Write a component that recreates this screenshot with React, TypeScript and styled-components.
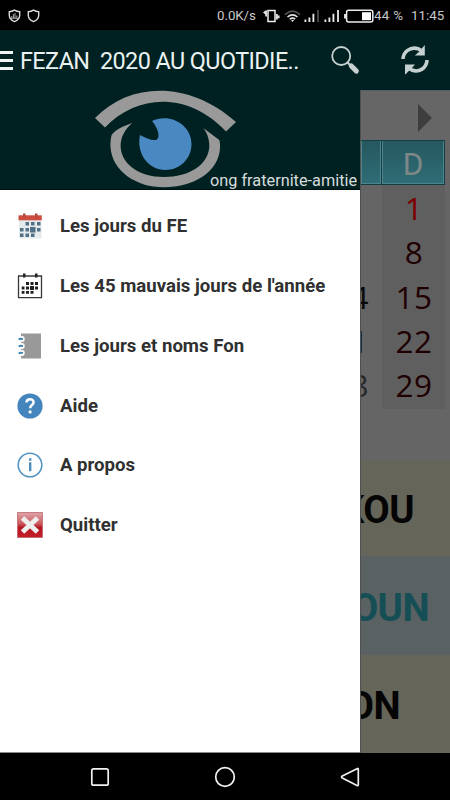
import React from 'react';
import styled, { createGlobalStyle } from 'styled-components';

const Global = createGlobalStyle`
  * { box-sizing: border-box; }
  body { margin: 0; background: #000; }
  svg { display: block; flex: none; }
`;

const Screen = styled.div`
  width: 450px;
  height: 800px;
  display: grid;
  grid-template-rows: 30px 60px 663px 47px;
  overflow: hidden;
  background: #000;
  font-family: Roboto, sans-serif;
`;

const StatusBar = styled.header`
  display: flex;
  align-items: center;
  justify-content: space-between;
  padding: 1px 5px 0 8px;
  color: #c9c9c9;
  font-size: 13.3px;
`;

const Cluster = styled.div<{ $gap?: number }>`
  display: flex;
  align-items: center;
  gap: ${(p) => p.$gap ?? 0}px;
`;

const StatusText = styled.span<{ $width: number; $spacing?: number }>`
  width: ${(p) => p.$width}px;
  letter-spacing: ${(p) => p.$spacing ?? 0}px;
  white-space: nowrap;
  line-height: 16px;
`;

const AppBar = styled.nav`
  display: flex;
  align-items: center;
  background: #002121;
`;

const MenuButton = styled.div`
  width: 20px;
  height: 19px;
  display: flex;
  flex-direction: column;
  justify-content: space-between;
`;

const MenuLine = styled.span`
  width: 13px;
  height: 3px;
  background: #eef3f3;
`;

const Title = styled.h1`
  margin: 0;
  width: 310px;
  color: #eaf2f2;
  font-size: 23.4px;
  font-weight: 400;
  letter-spacing: -0.57px;
  line-height: 30px;
  padding-top: 1px;
  white-space: pre;
`;

const Actions = styled.div`
  display: flex;
  align-items: center;
  gap: 40px;
`;

const Body = styled.main`
  display: grid;
  grid-template-columns: 360px 90px;
`;

const Drawer = styled.aside`
  background: #fff;
  border-bottom: 1px solid #8a8a8a;
  overflow: hidden;
`;

const Banner = styled.div`
  height: 100px;
  display: flex;
  align-items: flex-end;
  justify-content: space-between;
  padding: 0 3px 0 94px;
  background: #002121;
  border-bottom: 1px solid #001010;
`;

const Tagline = styled.span`
  margin-left: -26px;
  width: 147px;
  color: #d7dddd;
  font-size: 16.3px;
  line-height: 17px;
  white-space: nowrap;
`;

const MenuList = styled.ul`
  list-style: none;
  margin: 0;
  padding: 6.6px 0 0;
`;

const MenuItem = styled.li`
  display: flex;
  align-items: center;
  gap: 17px;
  height: 59.75px;
  padding-left: 17px;
  color: #303030;
  font-size: 18.6px;
  font-weight: 700;
  white-space: nowrap;
`;

const ItemLabel = styled.span`
  line-height: 22px;
`;

const Backdrop = styled.section`
  display: flex;
  flex-direction: column;
  overflow: hidden;
  background: #656565;
  border-left: 1px solid #505050;
`;

const MonthNav = styled.div`
  height: 50px;
  display: flex;
  align-items: center;
  justify-content: flex-end;
  padding: 5px 18px 0 0;
  border-top: 1px solid #526164;
  background: #666;
`;

const WeekHeader = styled.div`
  display: grid;
  grid-template-columns: 21px 63px;
  height: 45px;
`;

const WeekDay = styled.div`
  display: flex;
  align-items: center;
  justify-content: center;
  padding-top: 3px;
  color: #7c8788;
  font-size: 31.5px;
  background: linear-gradient(#25585f, #306d76);
  border: solid #143d44;
  border-width: 1px 1px 1px 0;
  box-shadow: inset -1px -1px 0 #4c858c, inset 1px 0 0 #4c858c;
`;

const Week = styled.div<{ $last?: boolean }>`
  display: grid;
  grid-template-columns: 21px 63px;
  height: ${(p) => (p.$last ? 47 : 44.3)}px;
  font-family: 'Open Sans', 'Noto Sans', sans-serif;
  font-size: 31.5px;
  line-height: 46px;
  letter-spacing: 0.4px;
`;

const Saturday = styled.span<{ $muted?: boolean }>`
  display: flex;
  justify-content: flex-end;
  padding-right: 13px;
  color: ${(p) => (p.$muted ? '#292929' : '#080808')};
`;

const Sunday = styled.span<{ $today?: boolean }>`
  text-align: center;
  padding-left: 1px;
  background: #5f5f5f;
  color: ${(p) => (p.$today ? '#7c0000' : '#1f0002')};
`;

const Spacer = styled.div`
  flex: 1;
`;

const DayBand = styled.div<{ $tone: string; $ink: string; $height: number; $right: number }>`
  display: flex;
  align-items: center;
  justify-content: flex-end;
  height: ${(p) => p.$height}px;
  padding: 3px ${(p) => p.$right}px 0 0;
  background: ${(p) => p.$tone};
  color: ${(p) => p.$ink};
  font-size: 38.4px;
  font-weight: 700;
  letter-spacing: -0.5px;
  white-space: nowrap;
`;

const NavBar = styled.footer`
  display: flex;
  align-items: center;
  justify-content: space-between;
  padding: 0 90px;
`;

const Shield = ({ chart }: { chart?: boolean }) => (
  <svg width="13" height="14" viewBox="0 0 13 14">
    <path d="M6.5 1.2 Q9 2.8 11.7 2.8 V6.5 Q11.5 10.5 6.5 12.6 Q1.5 10.5 1.3 6.5 V2.8 Q4 2.8 6.5 1.2Z" fill="none" stroke="#ddd" strokeWidth="1.4" />
    {chart && <path d="M3.8 9V7M5.4 9V5M7 9V4M8.8 9V6.5M3 9.3H10" stroke="#aaa" strokeWidth="1" />}
  </svg>
);

const Vibrate = () => (
  <svg width="18" height="14" viewBox="0 0 18 14">
    <path d="M5 1.6H12V12.4H5Z" fill="none" stroke="#eee" strokeWidth="1.5" />
    <path d="M0 3.6L2.2 1.6H4V7.5H2.2V5.4ZM13 5H14.8V6.4H16.6V9.2H14.8V10.6H13Z" fill="#ddd" />
  </svg>
);

const Wifi = () => (
  <svg width="17" height="14" viewBox="0 0 17 14">
    <path d="M1 5.6Q8.5-1.3 16 5.6" fill="none" stroke="#555" strokeWidth="1.6" />
    <path d="M3.5 8Q8.5 3.7 13.5 8M5.8 10.2Q8.5 8 11.2 10.2" fill="none" stroke="#e3e3e3" strokeWidth="1.6" />
    <path d="M7 11.1H10L8.5 13Z" fill="#eee" />
  </svg>
);

const Signal = ({ dim }: { dim?: boolean }) => (
  <svg width="17" height="14" viewBox="0 0 17 14">
    <path d="M1.4 10.5V13M5.4 8.5V13M9.4 4.8V13" stroke="#ededed" strokeWidth="1.8" />
    <path d="M14 1V13" stroke={dim ? '#4b4b4b' : '#ededed'} strokeWidth="1.8" />
  </svg>
);

const Battery = () => (
  <svg width="30" height="14" viewBox="0 0 30 14">
    <rect x="2.6" y="1.3" width="26.2" height="11.8" rx="2" fill="none" stroke="#eee" strokeWidth="1.5" />
    <path d="M0 5H2V9.5H0Z" fill="#ddd" />
    <path d="M18 3.2H27V11.2H18Z" fill="#fff" />
  </svg>
);

const SearchIcon = () => (
  <svg width="30" height="30" viewBox="0 0 30 30">
    <circle cx="11.2" cy="11" r="9" fill="none" stroke="#c8d0d0" strokeWidth="1.8" />
    <path d="M17 17L20.3 20.3" stroke="#c8d0d0" strokeWidth="2.2" />
    <path d="M21.3 20.9L26.3 26.1" stroke="#c8d0d0" strokeWidth="5" strokeLinecap="round" />
  </svg>
);

const SyncIcon = () => (
  <svg width="30" height="32" viewBox="0 0 30 32">
    <g fill="none" stroke="#c5d0d0" strokeWidth="3.6">
      <path d="M3 15C3.2 8 10 2.5 18 4.7L21 6.3" />
      <path d="M27 16C26.8 24 19 29 11.7 26L8.8 24.3" />
    </g>
    <path d="M24.8 1V11.5H14.8L19 7.8ZM5 30.8V20.5H15L11.7 24.2Z" fill="#c5d0d0" />
  </svg>
);

const EyeLogo = () => (
  <svg width="142" height="99" viewBox="0 0 142 99">
    <path d="M1 28C37-9 96-9 142 32L132 41.5C95 2 44 3 11 37.5Z" fill="#999" />
    <path d="M38.5 33C29 36 21 40 17.6 45C16.6 49 16.3 53 16.5 57C18 81 42 97.3 70 97.3C99 97.3 125 82 126 58C126.2 55 126 52 125.3 50L109.3 38C114 44 115.5 51 115.3 57C114 75 95 87 70 87C45 87 27 74 26.6 56C26.6 47 31 39 38.5 33Z" fill="#999" />
    <path d="M58 31C75 22.5 97.5 34 97.5 54C97.5 69 85.5 80 71.5 80C55 80 42 64 46 45C52 48 57 50.5 61.5 50C64.5 49.5 65 46 64 42C62.7 37.5 60.5 34 58 31Z" fill="#4988c1" />
  </svg>
);

const CalendarIcon = ({ mono }: { mono?: boolean }) => {
  const ink = mono ? '#202020' : '#517086';
  return (
    <svg width="26" height="26" viewBox="0 0 26 26">
      {mono ? (
        <path d="M1.5 3H24.5V24.7H1.5Z" fill="#fff" stroke="#383838" strokeWidth="1.3" />
      ) : (
        <>
          <path d="M2 7H24.5V25.5H2Z" fill="#e5eaed" />
          <path d="M1.5 2.3H24.8V7.3H1.5Z" fill="#cc4d40" />
        </>
      )}
      <path d="M6 .5H8.5V4.5H6ZM18 .5H20.5V4.5H18Z" fill={mono ? '#222' : '#b5473d'} />
      {mono ? (
        <path d="M9 9H12V12H9ZM13.5 9H16.5V12H13.5ZM18 9H21V12H18ZM4.7 13.5H7.5V16.5H4.7ZM9 13.5H12V16.5H9ZM13 13H17V17H13ZM18 13.5H21V16.5H18ZM4.7 18H7.5V20.8H4.7ZM9 18H12V20.8H9ZM13.5 18H16.5V20.8H13.5Z" fill={ink} />
      ) : (
        <path d="M8.5 9H12V12.5H8.5ZM14 9H17.5V12.5H14ZM20 9H23.5V12.5H20ZM3 15H6.5V18.5H3ZM8.5 15H12V18.5H8.5ZM13 14H18.5V19.5H13ZM20 15H23.5V18.5H20ZM3 20.5H6.5V24H3ZM8.5 20.5H12V24H8.5ZM14 20.5H17.5V24H14Z" fill={ink} />
      )}
    </svg>
  );
};

const NotebookIcon = () => (
  <svg width="26" height="26" viewBox="0 0 26 26">
    <path d="M4 .5H24V25.5H4Z" fill="#999" />
    {[6, 13, 20].map((y) => (
      <g key={y}>
        <circle cx="4.8" cy={y} r="2.9" fill="#fff" />
        <path d={`M1.6 ${y + 0.4}Q3.8 ${y - 0.9} 6 ${y + 0.3}`} fill="none" stroke="#3f83ae" strokeWidth="1.8" />
      </g>
    ))}
  </svg>
);

const HelpIcon = () => (
  <svg width="26" height="26" viewBox="0 0 26 26">
    <circle cx="13" cy="13" r="12.6" fill="#4385bc" />
    <path d="M9.5 9.5C9.8 5 17 5.3 16.5 9.6C16.2 12.2 13.2 12 13.2 15.2" fill="none" stroke="#fff" strokeWidth="2.5" />
    <circle cx="13.1" cy="18.9" r="1.6" fill="#fff" />
  </svg>
);

const InfoIcon = () => (
  <svg width="26" height="26" viewBox="0 0 26 26">
    <circle cx="13" cy="13" r="11.8" fill="#fff" stroke="#5795c1" strokeWidth="1.6" />
    <path d="M13.2 10.3V19.3M13.2 6.2V8.7" stroke="#4f8dbb" strokeWidth="2.4" />
  </svg>
);

const QuitIcon = () => (
  <svg width="26" height="26" viewBox="0 0 26 26">
    <defs>
      <linearGradient id="quit" x2="0" y2="1">
        <stop stopColor="#dfa5a8" />
        <stop offset=".45" stopColor="#cc5960" />
        <stop offset=".6" stopColor="#b51521" />
        <stop offset="1" stopColor="#c41f2b" />
      </linearGradient>
    </defs>
    <path d="M.5.5H25.5V25.5H.5Z" fill="url(#quit)" stroke="#b9676b" strokeWidth=".8" />
    <path d="M5.5 6L20.5 20M20.5 6L5.5 20" stroke="#eee" strokeWidth="5" />
  </svg>
);

const menu = [
  { label: 'Les jours du FE', icon: <CalendarIcon /> },
  { label: "Les 45 mauvais jours de l'année", icon: <CalendarIcon mono /> },
  { label: 'Les jours et noms Fon', icon: <NotebookIcon /> },
  { label: 'Aide', icon: <HelpIcon /> },
  { label: 'A propos', icon: <InfoIcon /> },
  { label: 'Quitter', icon: <QuitIcon /> },
];

const weeks = [
  { sat: '', sun: '1' },
  { sat: '', sun: '8' },
  { sat: '14', sun: '15' },
  { sat: '21', sun: '22' },
  { sat: '28', sun: '29' },
];

export default function App() {
  return (
    <>
      <Global />
      <Screen>
        <StatusBar>
          <Cluster $gap={6}>
            <Shield chart />
            <Shield />
          </Cluster>
          <Cluster>
            <StatusText $width={46} $spacing={-0.05}>0.0K/s</StatusText>
            <Cluster $gap={3}>
              <Vibrate />
              <Wifi />
              <Signal dim />
              <Signal />
              <Battery />
            </Cluster>
            <StatusText $width={37} $spacing={0.3}>44 %</StatusText>
            <StatusText $width={34}>11:45</StatusText>
          </Cluster>
        </StatusBar>
        <AppBar>
          <MenuButton>
            <MenuLine />
            <MenuLine />
            <MenuLine />
          </MenuButton>
          <Title>{'FEZAN  2020 AU QUOTIDIE..'}</Title>
          <Actions>
            <SearchIcon />
            <SyncIcon />
          </Actions>
        </AppBar>
        <Body>
          <Drawer>
            <Banner>
              <EyeLogo />
              <Tagline>ong fraternite-amitie</Tagline>
            </Banner>
            <MenuList>
              {menu.map((m) => (
                <MenuItem key={m.label}>
                  {m.icon}
                  <ItemLabel>{m.label}</ItemLabel>
                </MenuItem>
              ))}
            </MenuList>
          </Drawer>
          <Backdrop>
            <MonthNav>
              <svg width="14" height="28" viewBox="0 0 14 28">
                <path d="M0 0L14 14L0 28Z" fill="#3d3d3d" />
              </svg>
            </MonthNav>
            <WeekHeader>
              <WeekDay />
              <WeekDay>D</WeekDay>
            </WeekHeader>
            {weeks.map((w, i) => (
              <Week key={w.sun} $last={i === 4}>
                <Saturday $muted={i === 4}>{w.sat}</Saturday>
                <Sunday $today={i === 0}>{w.sun}</Sunday>
              </Week>
            ))}
            <Spacer />
            <DayBand $tone="#656559" $ink="#050505" $height={96} $right={36}>KOU</DayBand>
            <DayBand $tone="#596163" $ink="#164e56" $height={99} $right={21}>OUN</DayBand>
            <DayBand $tone="#656559" $ink="#050505" $height={98} $right={50}>ON</DayBand>
          </Backdrop>
        </Body>
        <NavBar>
          <svg width="20" height="20" viewBox="0 0 20 20">
            <rect x="1.8" y="1.8" width="16.4" height="16.4" rx="1.8" fill="none" stroke="#f2f2f2" strokeWidth="1.7" />
          </svg>
          <svg width="22" height="22" viewBox="0 0 22 22">
            <circle cx="11" cy="11" r="9.3" fill="none" stroke="#f2f2f2" strokeWidth="1.7" />
          </svg>
          <svg width="20" height="20" viewBox="0 0 20 20">
            <path d="M17.5 1.6Q18.3 1 18.3 2.4V17.6Q18.3 19 17 18.4L2.3 11Q.8 10 2.3 9Z" fill="none" stroke="#f2f2f2" strokeWidth="1.7" strokeLinejoin="round" />
          </svg>
        </NavBar>
      </Screen>
    </>
  );
}
